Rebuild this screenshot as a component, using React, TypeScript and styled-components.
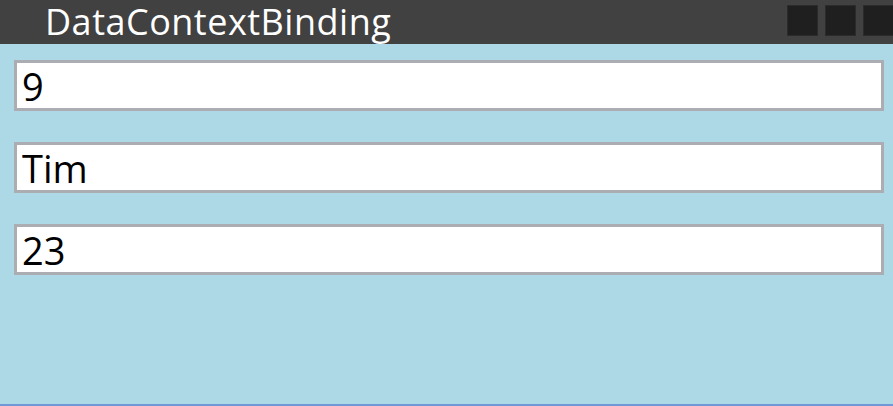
import React from "react";
import styled, { createGlobalStyle } from "styled-components";

const Global = createGlobalStyle`
  html, body { margin: 0; padding: 0; }
  body { width: 893px; height: 406px; overflow: hidden; font-family: "Open Sans", "Noto Sans", sans-serif; }
`;

const Window = styled.div`
  width: 893px;
  height: 406px;
  display: flex;
  flex-direction: column;
  background: #add8e6;
  box-sizing: border-box;
  border-bottom: 2px solid #7097d6;
`;

const TitleBar = styled.div`
  height: 44px;
  flex: none;
  background: #414141;
  display: flex;
  align-items: flex-start;
  justify-content: space-between;
`;

const Title = styled.div`
  color: #ffffff;
  font-size: 36px;
  letter-spacing: 0.5px;
  line-height: 44px;
  padding-left: 45px;
  white-space: nowrap;
`;

const Controls = styled.div`
  display: flex;
  gap: 7px;
  padding-top: 5px;
  margin-right: -1px;
`;

const ControlButton = styled.div`
  width: 31px;
  height: 31px;
  box-sizing: border-box;
  background: #1f1f1f;
  border: 1px solid #2b2b2b;
`;

const Content = styled.div`
  flex: 1;
  display: flex;
  flex-direction: column;
  gap: 31px;
  padding: 16px 9px 0 14px;
`;

const Field = styled.input`
  height: 51px;
  box-sizing: border-box;
  border: 3px solid #abadb3;
  background: #ffffff;
  color: #000000;
  font-family: "Open Sans", "Noto Sans", sans-serif;
  font-size: 38px;
  padding: 0 0 0 5px;
  margin: 0;
  outline: none;
  width: 100%;
`;

const values = ["9", "Tim", "23"];

export default function App() {
  return (
    <>
      <Global />
      <Window>
        <TitleBar>
          <Title>DataContextBinding</Title>
          <Controls>
            <ControlButton />
            <ControlButton />
            <ControlButton />
          </Controls>
        </TitleBar>
        <Content>
          {values.map((v) => (
            <Field key={v} defaultValue={v} readOnly />
          ))}
        </Content>
      </Window>
    </>
  );
}
